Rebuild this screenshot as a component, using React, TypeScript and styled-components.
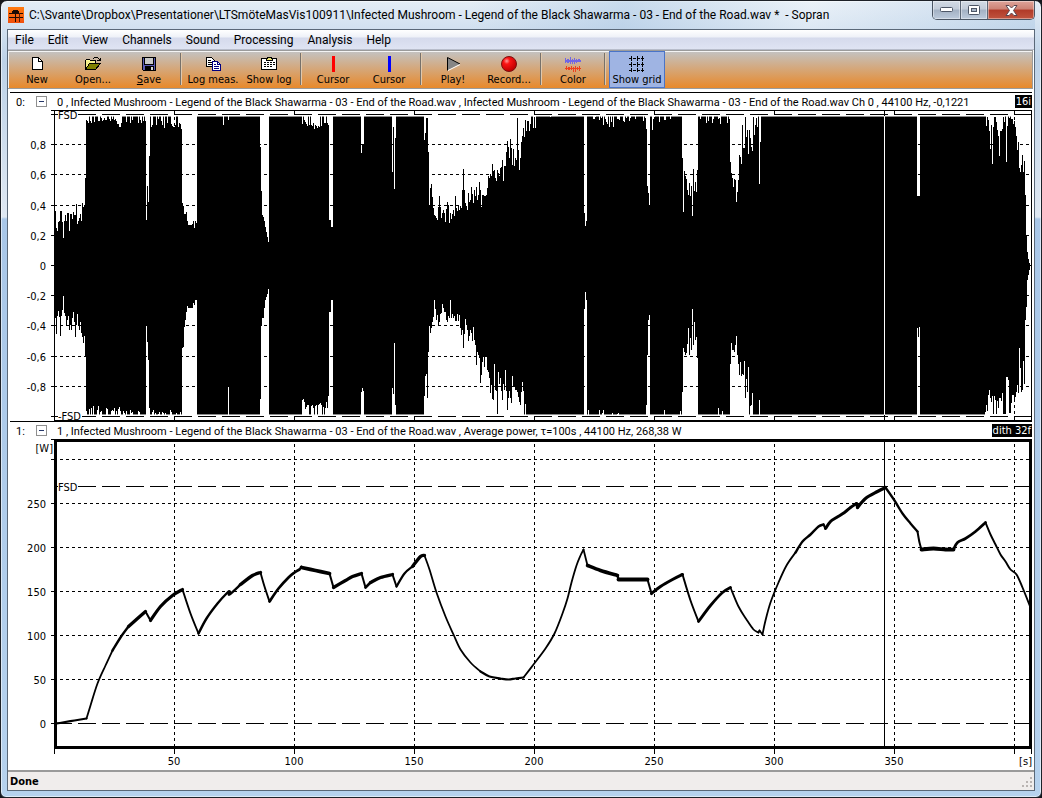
import React, { useLayoutEffect, useRef, useState } from 'react';
import styled, { createGlobalStyle, css } from 'styled-components';

const UI_FONT = '"DejaVu Sans Condensed", "Noto Sans", sans-serif';
const TITLE_FONT = 'Roboto, "Noto Sans", sans-serif';

const GlobalStyle = createGlobalStyle`
  * { box-sizing: border-box; }
  body { margin: 0; background: #15171c; }
  button { font: inherit; color: inherit; }
`;

/* ---------- window chrome ---------- */

const Window = styled.div`
  display: flex;
  flex-direction: column;
  min-height: 100vh;
  padding: 0 6px 6px;
  border: 1px solid #1d2128;
  border-radius: 7px 7px 6px 6px;
  background:
    linear-gradient(#e4edf6, #bdd2e8 60px, #dfe8f2 216px, #a9c7e8 218px, #b6d2ee);
  box-shadow: inset 0 0 0 1px rgba(255, 255, 255, 0.55);
`;

const TitleBar = styled.header`
  display: flex;
  align-items: flex-start;
  height: 28px;
  padding-left: 1px;
  background: linear-gradient(100deg, transparent 45%, rgba(150, 185, 220, 0.35) 60%, rgba(255, 255, 255, 0.25) 78%, rgba(150, 185, 220, 0.3));
`;

const AppIcon = styled.svg`
  flex: none;
  width: 16px;
  height: 16px;
  margin-top: 6px;
`;

const Title = styled.h1`
  flex: 1;
  min-width: 0;
  margin: 5px 0 0;
  padding-left: 5px;
  overflow: hidden;
  white-space: pre;
  font: 400 12px/18px ${TITLE_FONT};
  color: #000;
`;

const Controls = styled.div`
  display: flex;
  border: 1px solid #4a5563;
  border-top: 0;
  border-radius: 0 0 5px 5px;
  overflow: hidden;
`;

const ControlButton = styled.button<{ $close?: boolean }>`
  display: flex;
  align-items: center;
  justify-content: center;
  width: ${(p) => (p.$close ? 47 : 27)}px;
  height: 18px;
  padding: 0;
  border: 0;
  border-left: 1px solid #5c6776;
  box-shadow: inset 0 0 0 1px rgba(255, 255, 255, 0.4);
  background: ${(p) =>
    p.$close
      ? 'linear-gradient(#dfa49a, #cd8275 45%, #b13a28 50%, #c0543f)'
      : 'linear-gradient(#d3dbe5, #c2ccd9 45%, #a3b1c3 50%, #bccadb)'};
  &:first-child { border-left: 0; }
`;

const Client = styled.div`
  display: flex;
  flex: 1;
  flex-direction: column;
  border: 1px solid #5a6878;
  background: #fff;
`;

const MenuBar = styled.nav`
  display: flex;
  height: 20px;
  background: linear-gradient(#fff, #eef1f8 7px, #d5daec 8px, #dfe4f3);
  border-bottom: 1px solid #b8bdcb;
`;

const MenuItem = styled.button`
  height: 19px;
  padding: 1px 7px 0;
  border: 0;
  background: none;
  font: 400 12px/18px ${TITLE_FONT};
`;

/* ---------- toolbar ---------- */

const ToolBar = styled.div`
  display: flex;
  height: 39px;
  margin-right: 1px;
  padding-left: 1px;
  border: solid #9b9b9b;
  border-width: 1px 1px 1px 0;
  box-shadow: inset 1px 1px 0 #f4f4f4;
  background: linear-gradient(#c3c3c3, #e8892b);
`;

const ToolButton = styled.button<{ $on?: boolean }>`
  display: flex;
  flex-direction: column;
  align-items: center;
  width: 56px;
  height: 37px;
  padding: 4px 0 0;
  border: 1px solid transparent;
  background: none;
  font: 400 11px/14px ${UI_FONT};
  white-space: nowrap;
  ${(p) =>
    p.$on &&
    css`
      border-color: #4a74c8;
      background: #9fb4e3;
    `}
  svg { display: block; flex: none; margin-bottom: 1px; }
`;

const Separator = styled.span`
  width: 2px;
  height: 32px;
  margin: 2px 3px;
  border-left: 1px solid #77716a;
  border-right: 1px solid #e0c8ac;
`;

/* ---------- channels ---------- */

const Channels = styled.main`
  flex: 1;
  padding-top: 3px;
`;

const ChannelHead = styled.div<{ $ruled?: boolean }>`
  display: flex;
  align-items: center;
  height: ${(p) => (p.$ruled ? 18 : 17)}px;
  margin: 0 2px;
  padding-left: 6px;
  border-top: ${(p) => (p.$ruled ? '1px solid #000' : '0')};
  font: 400 11px/13px ${TITLE_FONT};
`;

const ChannelNumber = styled.span`
  width: 20px;
  padding-top: 1px;
`;

const Fold = styled.button`
  display: flex;
  align-items: center;
  justify-content: center;
  flex: none;
  width: 11px;
  height: 11px;
  padding: 0;
  border: 1px solid #8f8f8f;
  background: #fff;
  &::after { content: ''; width: 5px; height: 1px; background: #26386a; }
`;

const ChannelName = styled.span`
  flex: 1;
  min-width: 0;
  padding: 2px 0 0 10px;
  overflow: hidden;
  white-space: pre;
`;

const Badge = styled.span`
  padding: 0 1px;
  background: #000;
  color: #fff;
  font-family: ${UI_FONT};
`;

const Chart = styled.svg`
  display: block;
  width: 100%;
  font: 400 11px ${UI_FONT};
`;

const StatusBar = styled.footer`
  display: flex;
  align-items: center;
  justify-content: space-between;
  height: 20px;
  padding: 2px 2px 0;
  border-top: 2px solid #9a9a9a;
  background: #f0edec;
  font: 700 11px/16px ${UI_FONT};
`;

/* ---------- data ---------- */

type Pt = [number, number];

/* Traces are stored in pixels of a 977 px wide recording that starts at TRACE_X. */
const TRACE_X = 54;
const TRACE_W = 977;
const CLIP_TOP = 116;
const CLIP_BOTTOM = 415;
const WAVE_Y = 110;
const POWER_Y = 439;
const AXIS = 46;

const parse = (s: string): Pt[] =>
  s.trim().split(/\s+/).map((p) => p.split(',').map(Number) as Pt);

const UPPER = parse(`
54,223 55,211 56,228 57,231 58,222 59,221 60,211 62,222 63,238 64,221 65,215 66,221 67,213 69,231 70,214 72,219
73,212 74,215 76,204 77,224 78,221 79,218 80,214 81,221 82,203 83,207 84,205 85,178 86,116 146,220 147,186 148,202
149,156 150,116 182,203 183,206 184,214 186,212 187,221 188,225 192,224 193,221 194,228 195,221 196,223 197,116
223,125 224,116 228,120 229,116 260,147 261,191 262,215 263,217 264,221 265,227 266,232 267,237 268,242 269,116
329,220 331,227 333,116 361,153 362,144 364,116 392,172 393,127 394,189 395,138 396,116 424,140 425,133 426,118
428,152 429,205 430,188 431,184 432,197 433,208 434,215 435,216 436,218 437,220 438,207 439,196 440,207 441,218
442,213 443,210 444,213 445,222 446,209 447,202 448,205 449,223 450,213 451,219 452,214 453,210 454,216 455,196
456,208 457,211 458,206 459,210 460,206 461,208 462,190 463,169 464,190 465,203 466,206 467,210 468,193 469,202
470,200 471,187 472,194 473,203 474,190 475,196 476,187 477,200 478,195 479,182 480,190 481,207 482,195 484,196
486,195 487,188 488,176 489,178 490,174 491,176 492,164 493,171 494,170 495,178 496,181 497,170 498,173 499,176
500,168 501,167 502,160 503,181 504,166 506,152 507,141 508,147 509,158 510,139 511,148 512,165 513,149 514,166
515,158 516,160 517,118 518,150 519,170 520,158 521,142 522,136 523,128 524,137 525,120 526,131 527,121 529,131
530,124 531,116 533,128 534,117 535,128 536,116 550,117 551,116 584,213 585,226 586,221 587,116 646,129 647,186
648,193 649,205 650,116 652,130 653,116 682,158 683,212 684,171 685,176 686,179 687,190 688,195 689,183 690,196
691,186 692,216 693,169 694,191 695,182 696,192 697,170 698,116 730,162 731,173 732,178 733,187 734,179 735,180
736,202 737,192 738,180 739,155 740,157 741,164 742,125 743,148 744,148 745,117 746,137 747,130 748,154 749,130
750,138 751,147 752,151 753,117 754,135 755,125 756,118 757,127 758,116 759,184 760,142 761,116 917,196 920,116
986,126 987,117 988,120 989,131 990,149 991,125 992,164 993,127 994,117 996,122 997,130 998,136 999,156 1000,131
1002,129 1003,117 1004,122 1005,116 1006,162 1007,126 1008,116 1013,124 1014,121 1015,127 1016,136 1017,150
1018,142 1019,168 1020,172 1021,165 1022,155 1023,172 1024,161 1025,195 1026,235 1027,252 1028,259 1029,263 1030,265`);

const LOWER = parse(`
54,320 55,318 56,334 57,316 58,311 59,317 60,336 61,316 62,310 63,296 64,313 65,316 66,325 67,320 68,316 69,330
70,325 71,330 72,318 73,312 74,322 75,337 76,325 77,314 78,325 79,330 80,322 81,333 82,337 83,343 84,336 85,357
86,415 146,325 147,342 148,360 149,408 150,415 182,348 183,347 184,327 185,320 186,312 187,306 188,308 192,308
193,303 194,305 195,300 197,415 228,386 229,415 260,399 261,326 262,318 264,308 265,300 266,297 267,294 268,289
269,415 302,400 303,399 304,402 305,415 328,396 329,312 331,300 333,415 361,392 362,388 363,391 364,415 392,388
393,394 394,343 395,405 396,415 424,396 425,376 426,374 427,398 428,352 429,326 430,333 431,328 432,322 433,317
434,300 435,309 436,320 437,315 438,325 439,322 440,314 441,313 442,304 443,308 444,312 446,320 447,322 448,316
449,318 450,300 451,318 452,314 453,318 454,316 455,321 457,314 458,321 459,315 460,328 461,335 462,330 463,348
464,334 465,319 466,325 467,330 468,341 469,336 470,330 471,333 472,341 473,327 474,340 475,345 476,365 477,352
478,355 479,358 480,383 481,375 482,362 483,357 484,367 485,357 487,370 488,372 489,378 490,393 491,385 492,399
493,400 494,364 495,390 496,391 497,414 498,372 499,384 500,378 501,391 502,400 503,384 504,390 505,370 506,391
507,410 508,398 509,391 510,398 511,403 512,376 513,387 515,390 517,392 518,397 519,402 520,405 521,392 522,382
523,391 524,415 525,404 526,415 584,309 585,292 586,300 587,415 646,405 647,355 648,320 649,315 650,415 664,410
665,415 680,411 681,415 682,392 683,348 684,352 685,355 686,353 687,344 688,328 689,355 690,338 691,350 692,309
693,345 694,322 695,340 696,337 697,358 698,415 718,408 719,415 722,411 723,415 730,364 731,343 732,350 734,352
735,345 736,336 737,355 738,364 739,375 740,362 741,376 742,374 743,375 744,361 745,398 746,379 747,392 748,367
749,415 750,406 751,405 752,393 753,415 759,400 760,415 917,328 918,337 919,327 920,415 985,412 986,405 987,411
988,395 989,390 990,398 991,402 992,396 993,414 994,396 995,400 996,414 997,401 998,408 999,398 1001,401 1002,393
1003,414 1006,377 1008,380 1009,413 1011,403 1012,395 1014,400 1015,397 1016,392 1017,385 1018,393 1019,348
1020,368 1021,392 1022,390 1023,361 1024,384 1025,320 1026,307 1027,280 1028,275 1029,270 1030,266`);

/* [from, to, depth, density] stretches where the clipped peaks are ragged */
const RAGGED_TOP: number[][] = [
  [86, 97, 10, 0.6], [97, 116, 6, 0.7], [116, 122, 13, 0.7], [122, 146, 8, 0.5], [150, 182, 13, 0.5],
  [302, 329, 13, 0.65], [588, 603, 5, 0.3], [603, 618, 12, 0.5], [618, 646, 6, 0.3], [653, 682, 6, 0.2],
  [698, 730, 9, 0.2], [1008, 1013, 5, 0.4],
];
const RAGGED_BOTTOM: number[][] = [
  [86, 120, 10, 0.5], [120, 146, 5, 0.4], [150, 182, 5, 0.45], [305, 328, 13, 0.7],
  [588, 604, 6, 0.35], [612, 620, 5, 0.3],
];

const rand = (n: number) => {
  const v = Math.sin(n * 127.1) * 43758.5453;
  return v - Math.floor(v);
};

function levels(points: Pt[], ragged: number[][], rest: number, dir: number): number[] {
  const out: number[] = [];
  let k = 0;
  for (let x = TRACE_X; x < TRACE_X + TRACE_W; x++) {
    while (k + 1 < points.length && points[k + 1][0] <= x) k++;
    let y = points[k][1];
    const zone = ragged.find((z) => x >= z[0] && x < z[1]);
    if (zone && y === rest && rand(x * 3 + dir) < zone[3]) {
      y += dir * Math.round(zone[2] * (0.25 + 0.75 * rand(x + 0.5)));
    }
    out.push(y);
  }
  return out;
}

const TOPS = levels(UPPER, RAGGED_TOP, CLIP_TOP, 1);
const BOTTOMS = levels(LOWER, RAGGED_BOTTOM, CLIP_BOTTOM, -1);

/* Each stretch is one smooth run between two kinks, with its own pen width. */
const POWER: { w: number; pts: Pt[] }[] = [
  [2.2, '55,723 62,722 74,720 86,718'],
  [1.8, '86,718 90,705 97,683 105,665 112,650'],
  [2.4, '112,650 120,637 128,626'],
  [3.3, '128,626 137,618 145,611'],
  [2, '145,611 150,620'],
  [3.2, '150,620 160,606 172,595 182,589'],
  [1.9, '182,589 190,613 198,633'],
  [2.4, '198,633 206,618 217,603 227,592 229,591'],
  [2.4, '229,591 229,594 240,584'],
  [3.3, '240,584 252,575 260,572'],
  [1.9, '260,572 264,586 269,601'],
  [2.7, '269,601 278,588 288,577 294,572 299,569'],
  [3.8, '301,567 315,570 329,573'],
  [2, '299,569 301,566'],
  [2, '329,573 333,587'],
  [3.3, '333,587 345,580 352,576 361,573'],
  [2, '361,573 365,587'],
  [2.6, '365,587 370,582'],
  [3.3, '370,582 380,577 392,574'],
  [2, '392,574 396,586'],
  [2.2, '396,586 404,573 412,566'],
  [3.3, '412,566 420,556 424,555'],
  [1.8, '424,555 429,569 436,592 445,616 453,634 460,649 470,662 480,671'],
  [2.2, '480,671 489,676 500,678 508,679 515,678 523,677'],
  [1.8, '523,677 533,664 545,648 554,633 562,613 567,598 571,582 576,565 580,555 583,549'],
  [1.8, '583,549 587,565'],
  [3.5, '587,565 600,570 617,575'],
  [2.4, '617,575 618,579'],
  [3.8, '618,579 630,579 647,579'],
  [2, '647,579 651,593'],
  [3.1, '651,593 660,586 672,579 682,574'],
  [1.9, '682,574 690,600 698,621'],
  [2.8, '698,621 710,605 722,592 730,587'],
  [1.8, '730,587 738,606 746,619 753,629 758,632'],
  [1.8, '758,632 759,630'],
  [1.8, '759,630 762,634'],
  [1.8, '762,634 765,620 770,602 778,582 786,565 795,552'],
  [2.4, '795,552 802,541 810,534 818,526 823,524'],
  [2.2, '823,524 825,528'],
  [3, '825,528 830,521 836,517 844,512 850,507 856,503'],
  [3, '856,503 857,507'],
  [3.2, '857,507 865,498 877,491 885,487'],
  [2.3, '885,487 894,500 902,513 910,523 917,531'],
  [2, '917,531 919,542 921,549'],
  [3.8, '921,549 933,548 945,549 953,549'],
  [2.8, '953,549 957,542 965,538 975,531 985,522'],
  [1.9, '985,522 990,534 995,544 1000,554 1005,561 1010,569 1016,574 1022,587 1030,607'],
].map(([w, s]) => ({ w: w as number, pts: parse(s as string) }));

function smooth(p: Pt[]): string {
  let d = `M${p[0][0]} ${p[0][1]}`;
  for (let i = 0; i + 1 < p.length; i++) {
    const a = p[i - 1] ?? p[i];
    const b = p[i];
    const c = p[i + 1];
    const e = p[i + 2] ?? c;
    d += `C${b[0] + (c[0] - a[0]) / 6} ${b[1] + (c[1] - a[1]) / 6} ${c[0] - (e[0] - b[0]) / 6} ${c[1] - (e[1] - b[1]) / 6} ${c[0]} ${c[1]}`;
  }
  return d;
}

/* ---------- charts ---------- */

function useWidth() {
  const ref = useRef<SVGSVGElement>(null);
  const [width, setWidth] = useState(1026);
  useLayoutEffect(() => {
    const el = ref.current;
    if (!el) return;
    const update = () => setWidth(Math.round(el.getBoundingClientRect().width));
    update();
    const ro = new ResizeObserver(update);
    ro.observe(el);
    return () => ro.disconnect();
  }, []);
  const plot = width - 49;
  const at = (x: number) => AXIS + ((x - TRACE_X) * plot) / TRACE_W;
  return { ref, right: AXIS + plot + 1, at };
}

const SECONDS = [50, 100, 150, 200, 250, 300, 350, 400];
const secondX = (s: number) => TRACE_X + s * 2.4;

const line = { stroke: '#000', strokeWidth: 1 };

function Waveform() {
  const { ref, right, at } = useWidth();
  const edge = (y: number, i: number) => `L${at(TRACE_X + i)} ${y - WAVE_Y}H${at(TRACE_X + i + 1)}`;
  const shape =
    `M${AXIS} ${265 - WAVE_Y}` +
    TOPS.map(edge).join('') +
    BOTTOMS.map((y, i) => `L${at(TRACE_X + i + 1)} ${y - WAVE_Y}H${at(TRACE_X + i)}`)
      .reverse()
      .join('') +
    'Z';
  const rows: [string, number][] = [
    ['0,8', 34], ['0,6', 64], ['0,4', 95], ['0,2', 125], ['0', 155],
    ['-0,2', 185], ['-0,4', 215], ['-0,6', 246], ['-0,8', 276],
  ];
  const cursor = Math.round(at(884)) + 0.5;
  return (
    <Chart ref={ref} height={312} role="img" aria-label="Waveform of channel 0">
      <defs>
        <clipPath id="body"><rect x={0} y={7} width={right} height={297} /></clipPath>
      </defs>
      <g shapeRendering="crispEdges">
        {SECONDS.map((s) => {
          const x = Math.round(at(secondX(s))) + 0.5;
          return <line key={s} {...line} x1={x} x2={x} y1={1} y2={310} strokeDasharray="3 3" />;
        })}
        {rows.map(([t, y]) => (
          <g key={t} {...line}>
            <line x1={43} x2={AXIS} y1={y + 0.5} y2={y + 0.5} />
            <line x1={AXIS} x2={right} y1={y + 0.5} y2={y + 0.5} strokeDasharray="3 3" />
          </g>
        ))}
        {[4.5, 306.5].map((y) => (
          <g key={y} {...line}>
            <line x1={43} x2={AXIS} y1={y} y2={y} />
            <line x1={AXIS} x2={right} y1={y} y2={y} strokeDasharray="18 6" />
          </g>
        ))}
        <path d={shape} fill="#8c8c8c" />
        <path d={shape} fill="#000" clipPath="url(#body)" />
        <path d={`M43 0.5H${right}M${AXIS + 0.5} 0V312M${right - 0.5} 0V312`} {...line} />
        <rect x={AXIS} y={310} width={right - AXIS} height={2} />
        <path d={`M2 311.5H${AXIS}`} {...line} />
        <path d={`M${cursor} 0V6M${cursor} 305V310`} {...line} />
        <path d={`M${cursor} 6V305`} stroke="#fff" />
        <rect x={50} y={2} width={20} height={7} fill="#fff" />
        <rect x={50} y={303} width={24} height={7} fill="#fff" />
      </g>
      {rows.map(([t, y]) => (
        <text key={t} x={38} y={y + 5} textAnchor="end">{t}</text>
      ))}
      <text x={50} y={9}>FSD</text>
      <text x={50} y={310}>-FSD</text>
    </Chart>
  );
}

function PowerCurve() {
  const { ref, right, at } = useWidth();
  const rows: [string, number][] = [
    ['', 20], ['250', 64], ['200', 108], ['150', 152], ['100', 196], ['50', 240], ['0', 284],
  ];
  const cursor = Math.round(at(884)) + 0.5;
  return (
    <Chart ref={ref} height={331} role="img" aria-label="Average power of channel 1">
      <g shapeRendering="crispEdges">
        {SECONDS.map((s) => {
          const x = Math.round(at(secondX(s))) + 0.5;
          return (
            <g key={s} {...line}>
              <line x1={x} x2={x} y1={5} y2={308} strokeDasharray="3 3" />
              <line x1={x} x2={x} y1={308} y2={315} />
            </g>
          );
        })}
        {rows.map(([t, y]) => (
          <g key={y} {...line}>
            <line x1={43} x2={AXIS} y1={y + 0.5} y2={y + 0.5} />
            <line x1={AXIS} x2={right} y1={y + 0.5} y2={y + 0.5} strokeDasharray={t === '0' ? '18 6' : '3 3'} />
          </g>
        ))}
        <line x1={AXIS} x2={right} y1={47.5} y2={47.5} {...line} strokeDasharray="18 6" />
        <path d={`M43 0.5H${AXIS}M${AXIS + 0.5} 310V315M${right - 0.5} 310V315`} {...line} />
        <path d={`M${cursor} 2V308`} {...line} />
        <rect x={AXIS + 1.5} y={1.5} width={right - AXIS - 3} height={307} fill="none" stroke="#000" strokeWidth={3} />
        <rect x={50} y={42} width={20} height={11} fill="#fff" />
      </g>
      <g fill="none" stroke="#000" strokeLinejoin="round" strokeLinecap="round">
        {POWER.map(({ w, pts }, i) => (
          <path
            key={i}
            strokeWidth={w}
            d={smooth(pts.map(([x, y]): Pt => [at(x) + 0.5, y - POWER_Y + 0.5]))}
          />
        ))}
      </g>
      {rows.map(([t, y]) => (
        <text key={y} x={38} y={y + 5} textAnchor="end">{t}</text>
      ))}
      <text x={45} y={13} textAnchor="end">[W]</text>
      <text x={50} y={52}>FSD</text>
      {SECONDS.slice(0, 7).map((s) => (
        <text key={s} x={Math.round(at(secondX(s)))} y={326} textAnchor="middle">{s}</text>
      ))}
      <text x={right} y={326} textAnchor="end">[s]</text>
    </Chart>
  );
}

/* ---------- toolbar icons ---------- */

const Icon = ({ children }: { children: React.ReactNode }) => (
  <svg width={16} height={16} viewBox="0 0 16 16" shapeRendering="crispEdges" aria-hidden="true">
    {children}
  </svg>
);

const NewIcon = () => (
  <Icon>
    <path d="M3.5 1.5h6l4 4v8h-10z" fill="#fff" stroke="#000" />
    <path d="M9.5 1.5v4h4" fill="none" stroke="#000" />
  </Icon>
);
const OpenIcon = () => (
  <Icon>
    <path d="M0.5 13.5V4.5L1.5 3.5H4.5L5.5 4.5H10.5V7.5" fill="#ffffa0" stroke="#000" />
    <path d="M1 13V5h9v3H5z" fill="#f6f08a" />
    <path d="M0.5 13.5L4.5 7.5H15.5L10.5 13.5Z" fill="#808000" stroke="#000" />
    <path d="M8.5 3V2.5L9.5 1.5H12.5L14.5 3.5V5M15 1.5v3h-3.5" fill="none" stroke="#000" />
  </Icon>
);
const SaveIcon = () => (
  <Icon>
    <path d="M1.5 1.5H14.5V14.5H2.5L1.5 13.5Z" fill="#5a5ab4" stroke="#000" />
    <rect x={4} y={2} width={8} height={6} fill="#c8c8c8" />
    <path d="M3.5 2V8.5H12.5V2" fill="none" stroke="#000" />
    <rect x={4} y={10} width={9} height={4} fill="#000" />
    <rect x={10} y={11} width={2} height={3} fill="#d8d8d8" />
  </Icon>
);
const CopyIcon = () => (
  <Icon>
    <path d="M1.5 1.5H6.5L9.5 4.5V10.5H1.5Z" fill="#fff" stroke="#000" />
    <path d="M3 4.5h3M3 6.5h4M3 8.5h4" stroke="#000" />
    <path d="M7.5 5.5H12.5L15.5 8.5V14.5H7.5Z" fill="#fff" stroke="#000080" />
    <path d="M12.5 5.5V8.5H15.5M9 8.5h2M9 10.5h5M9 12.5h5" stroke="#000080" fill="none" />
  </Icon>
);
const LogIcon = () => (
  <Icon>
    <rect x={0.5} y={2.5} width={15} height={11} rx={1} fill="#fff" stroke="#000" />
    <path d="M5 4V2h1V1h4v1h1v2z" fill="#e8e070" stroke="#000" />
    <path d="M3 6.5h11M3 8.5h11M3 10.5h9" stroke="#000" strokeDasharray="2 1" />
  </Icon>
);
const BarIcon = ({ color }: { color: string }) => (
  <Icon><rect x={7} y={0} width={3} height={16} fill={color} /></Icon>
);
const PlayIcon = () => (
  <svg width={16} height={16} viewBox="0 0 16 16" aria-hidden="true">
    <path d="M2.5 1.5V14.5L15 8Z" fill="#868686" />
    <path d="M2.5 14.5V1.5L15 8" fill="none" stroke="#000" />
    <path d="M3 14.5L15 8.5" stroke="#fff" />
  </svg>
);
const RecordIcon = () => (
  <svg width={16} height={16} viewBox="0 0 16 16" aria-hidden="true">
    <defs>
      <radialGradient id="rec" cx="0.35" cy="0.3" r="0.7">
        <stop offset="0" stopColor="#ff9a9a" />
        <stop offset="0.3" stopColor="#fb1414" />
        <stop offset="1" stopColor="#c00000" />
      </radialGradient>
    </defs>
    <circle cx={8} cy={8} r={7.5} fill="url(#rec)" stroke="#7a1010" />
  </svg>
);
const ColorIcon = () => (
  <Icon>
    <path
      d="M0 4h16v2H0zM0 2h1v5H0zM2 3h2v4H2zM5 1h1v7H5zM7 3h1v5H7zM9 2h1v6H9zM11 3h1v4h-1zM13 3h2v3h-2z"
      fill="#6f66e6"
    />
    <path
      d="M0 12h16v1H0zM1 10h1v4H1zM3 11h2v3H3zM6 10h1v4H6zM8 11h1v5H8zM10 10h1v6h-1zM12 11h1v3h-1zM14 10h1v5h-1z"
      fill="#f0401c"
    />
  </Icon>
);
const GridIcon = () => (
  <Icon>
    <path d="M0 2.5H16M0 8.5H16M0 14.5H16" stroke="#000" strokeDasharray="3 1" />
    <path d="M2.5 0V16M8.5 0V16M13.5 0V16" stroke="#000" strokeDasharray="2 1" />
  </Icon>
);

const TOOLS: ([React.ReactNode, React.ReactNode, boolean?] | null)[] = [
  [<NewIcon />, 'New'],
  [<OpenIcon />, 'Open...'],
  [<SaveIcon />, <span><u>S</u>ave</span>],
  null,
  [<CopyIcon />, 'Log meas.'],
  [<LogIcon />, 'Show log'],
  null,
  [<BarIcon color="#f00" />, 'Cursor'],
  [<BarIcon color="#00f" />, 'Cursor'],
  null,
  [<PlayIcon />, 'Play!'],
  [<RecordIcon />, 'Record...'],
  null,
  [<ColorIcon />, 'Color'],
  null,
  [<GridIcon />, 'Show grid', true],
];

const MENUS = ['File', 'Edit', 'View', 'Channels', 'Sound', 'Processing', 'Analysis', 'Help'];

const SONG = 'Infected Mushroom - Legend of the Black Shawarma - 03 - End of the Road.wav';

export default function App() {
  return (
    <>
      <GlobalStyle />
      <Window>
        <TitleBar>
          <AppIcon viewBox="0 0 16 16" aria-hidden="true">
            <defs>
              <linearGradient id="app" x2="0" y2="1">
                <stop offset="0" stopColor="#ff7a10" />
                <stop offset="1" stopColor="#f0500c" />
              </linearGradient>
            </defs>
            <rect width={16} height={16} fill="url(#app)" />
            <path d="M5 3h5v1h1v2h4v1H1V6h3V4h1zM1 10h14v1H1zM7 6h1v9H7z" fill="#1c0a04" />
            <path d="M11 6h1v9h-1z" fill="#5a1c06" />
          </AppIcon>
          <Title>{`C:\\Svante\\Dropbox\\Presentationer\\LTSmöteMasVis100911\\${SONG} *  - Sopran`}</Title>
          <Controls>
            <ControlButton aria-label="Minimize">
              <svg width={13} height={6} aria-hidden="true">
                <rect x={0.5} y={0.5} width={12} height={4} rx={1} fill="#fff" stroke="#4d5666" />
              </svg>
            </ControlButton>
            <ControlButton aria-label="Maximize">
              <svg width={12} height={10} aria-hidden="true">
                <rect x={0.5} y={0.5} width={11} height={9} rx={1} fill="#fff" stroke="#4d5666" />
                <rect x={3.5} y={3.5} width={5} height={3} fill="#a9b6c7" stroke="#4d5666" />
              </svg>
            </ControlButton>
            <ControlButton $close aria-label="Close">
              <svg width={13} height={11} aria-hidden="true">
                <path d="M1 .5H4L6.5 3L9 .5H12L8.5 5.5L12 10.5H9L6.5 8L4 10.5H1L4.5 5.5Z" fill="#fff" stroke="#5a4650" />
              </svg>
            </ControlButton>
          </Controls>
        </TitleBar>
        <Client>
          <MenuBar>
            {MENUS.map((m) => (
              <MenuItem key={m}>{m}</MenuItem>
            ))}
          </MenuBar>
          <ToolBar>
            {TOOLS.map((t, i) =>
              t ? (
                <ToolButton key={i} $on={t[2]}>
                  {t[0]}
                  {t[1]}
                </ToolButton>
              ) : (
                <Separator key={i} />
              ),
            )}
          </ToolBar>
          <Channels>
            <ChannelHead $ruled>
              <ChannelNumber>0:</ChannelNumber>
              <Fold aria-label="Collapse channel 0" />
              <ChannelName>{`0 , ${SONG} , ${SONG} Ch 0 , 44100 Hz, -0,1221`}</ChannelName>
              <Badge>16i</Badge>
            </ChannelHead>
            <Waveform />
            <ChannelHead>
              <ChannelNumber>1:</ChannelNumber>
              <Fold aria-label="Collapse channel 1" />
              <ChannelName>{`1 , ${SONG} , Average power, τ=100s , 44100 Hz, 268,38 W`}</ChannelName>
              <Badge>dith 32f</Badge>
            </ChannelHead>
            <PowerCurve />
          </Channels>
          <StatusBar>
            Done
            <svg width={10} height={10} aria-hidden="true" fill="#b9b4b2">
              <path d="M8 0h2v2H8zM8 4h2v2H8zM8 8h2v2H8zM4 4h2v2H4zM4 8h2v2H4zM0 8h2v2H0z" />
            </svg>
          </StatusBar>
        </Client>
      </Window>
    </>
  );
}
